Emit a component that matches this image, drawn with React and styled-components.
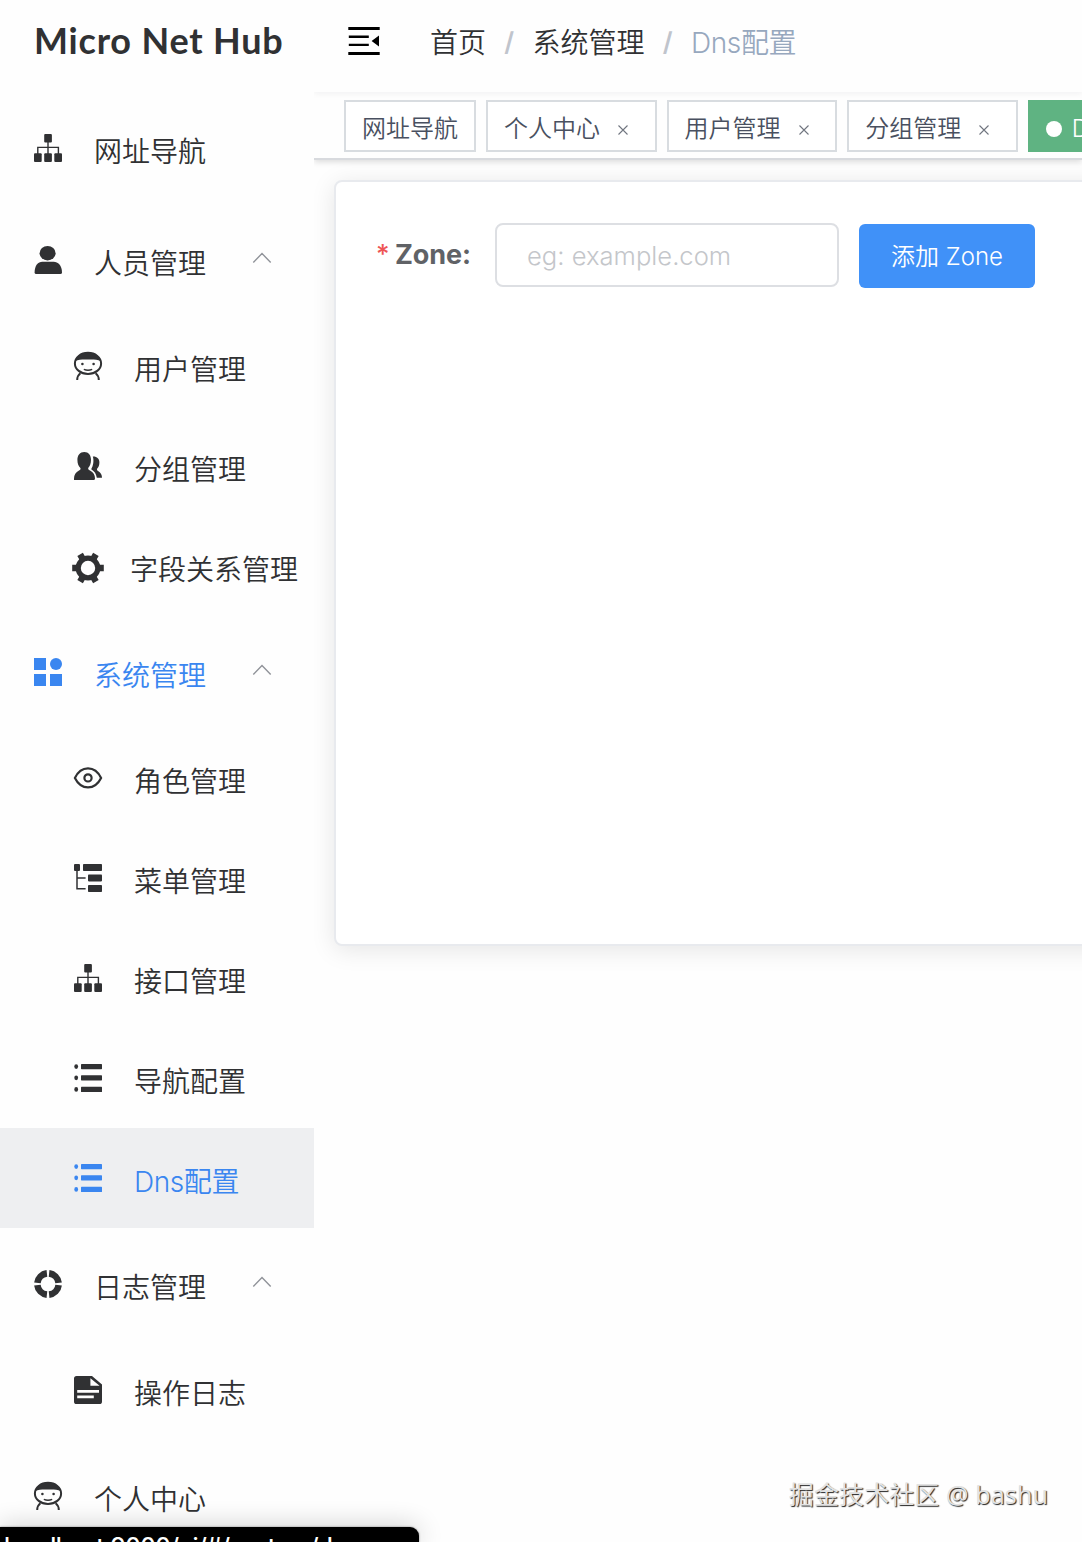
import React from "react";
import styled, { createGlobalStyle, css } from "styled-components";

const GlobalStyle = createGlobalStyle`
  * {
    box-sizing: border-box;
  }
  body {
    margin: 0;
    background: #fefefe;
    font-family: Inter, "Noto Sans CJK SC", sans-serif;
    font-weight: 350;
    color: #303133;
  }
`;

const Page = styled.div`
  position: relative;
  display: flex;
  width: 1082px;
  height: 1542px;
  overflow: hidden;
`;

/* ---------- sidebar ---------- */

const Sidebar = styled.aside`
  flex: none;
  width: 314px;
`;

const Logo = styled.h1`
  height: 92px;
  margin: 0;
  padding-left: 34px;
  font-family: Lato, sans-serif;
  font-size: 36px;
  font-weight: 700;
  line-height: 80px;
  letter-spacing: 0.8px;
  white-space: nowrap;
  color: #303133;
`;

const MenuRow = styled.div`
  display: flex;
  align-items: center;
  height: ${(props) => (props.$child ? 100 : 112)}px;
  padding-left: ${(props) => (props.$child ? 74 : 34)}px;
  color: ${(props) => (props.$blue ? "#3a86f0" : "#303133")};
  background: ${(props) => (props.$active ? "#eeeff1" : "transparent")};
`;

const Icon = styled.svg`
  flex: none;
  display: block;
  width: 28px;
  height: 28px;
  margin-top: ${(props) => (props.$low ? 4 : 0)}px;
  overflow: visible;
  fill: currentColor;
`;

const MenuText = styled.span`
  padding-top: 8px;
  margin-left: ${(props) => (props.$tight ? 28 : 32)}px;
  font-size: 28px;
  line-height: 40px;
  letter-spacing: ${(props) => (props.$latin ? "-0.4px" : "normal")};
  white-space: nowrap;
`;

const Chevron = styled.svg`
  width: 20px;
  height: 12px;
  margin: 0 0 5px 46px;
  fill: none;
  stroke: #909399;
  stroke-width: 1.4;
`;

/* ---------- right side ---------- */

const Main = styled.main`
  flex: 1;
  min-width: 0;
  overflow: hidden;
`;

const Navbar = styled.header`
  position: relative;
  display: flex;
  height: 92px;
  padding: 27px 0 0 34px;
  background: #fefefe;
  box-shadow: 0 2px 6px rgba(0, 21, 41, 0.05);
`;

const Hamburger = styled.svg`
  width: 32px;
  height: 28px;
  margin-right: 50px;
  fill: #000;
`;

const Breadcrumb = styled.nav`
  display: flex;
  height: 32px;
  font-size: 28px;
  line-height: 32px;
`;

const Crumb = styled.span`
  color: ${(props) => (props.$last ? "#97a8be" : "#303133")};
  letter-spacing: ${(props) => (props.$last ? "-0.4px" : "normal")};
`;

const Slash = styled.span`
  width: 46.5px;
  text-align: center;
  font-weight: 600;
  font-size: 26px;
  line-height: 30px;
  color: #c0c4cc;
`;

const TagsBar = styled.div`
  display: flex;
  gap: 10px;
  height: 68px;
  padding: 8px 0 0 30px;
  border-bottom: 2px solid #d8dade;
  box-shadow: 0 2px 6px rgba(0, 0, 0, 0.14);
`;

const Tag = styled.div`
  flex: none;
  display: flex;
  align-items: center;
  width: ${(props) => props.$width}px;
  height: 52px;
  padding-left: 16px;
  font-size: 24px;
  white-space: nowrap;
  color: #495060;
  background: #fff;
  border: 2px solid #d8dce0;
  ${(props) =>
    props.$active &&
    css`
      color: #fff;
      background: #5fb382;
      border-color: #5fb382;
    `}
`;

const TagText = styled.span`
  padding-top: 6px;
  line-height: 36px;
`;

const Close = styled.svg`
  width: 10px;
  height: 10px;
  margin: 7px 0 0 18px;
  stroke: #70757f;
  stroke-width: 1.1;
`;

const Dot = styled.span`
  width: 16px;
  height: 16px;
  margin: 6px 10px 0 0;
  border-radius: 50%;
  background: #fff;
`;

const Card = styled.section`
  width: 1000px;
  height: 766px;
  margin: 20px 0 0 20px;
  padding: 41px 40px;
  background: #fff;
  border: 2px solid #e8eaee;
  border-radius: 8px;
  box-shadow: 0 4px 24px rgba(0, 0, 0, 0.1);
`;

const Form = styled.form`
  display: flex;
  align-items: flex-start;
`;

const Label = styled.label`
  display: flex;
  width: 119px;
  font-size: 27px;
  font-weight: 700;
  line-height: 64px;
  letter-spacing: -0.1px;
  color: #606266;

  &::before {
    content: "*";
    width: 19px;
    font-size: 26px;
    font-weight: 500;
    line-height: 62px;
    color: #ee5555;
  }
`;

const Input = styled.input`
  width: 344px;
  height: 64px;
  padding: 0 30px;
  font: inherit;
  font-size: 25.6px;
  border: 2px solid #dddfe3;
  border-radius: 8px;
  background: #fff;
  outline: none;

  &::placeholder {
    color: #c4c6ca;
    opacity: 1;
  }
`;

const Button = styled.button`
  width: 176px;
  height: 64px;
  margin: 1px 0 0 20px;
  padding: 0 0 4px;
  font: inherit;
  font-size: 24px;
  color: #fff;
  background: #4091f8;
  border: 0;
  border-radius: 6px;
`;

/* ---------- overlays ---------- */

const StatusBubble = styled.div`
  position: absolute;
  left: 0;
  bottom: 0;
  width: 419px;
  height: 15px;
  padding-left: 4px;
  color: #fff;
  background: #000;
  border-top-right-radius: 9px;
  box-shadow: 0 0 26px rgba(0, 0, 0, 0.24), 0 0 2px rgba(0, 0, 0, 0.5);
  font-size: 24px;
  font-weight: 500;
  line-height: 39px;
  letter-spacing: -0.5px;
  white-space: nowrap;
`;

const Watermark = styled.div`
  position: absolute;
  right: 34px;
  bottom: 28px;
  font-family: "Noto Sans", "Noto Sans CJK SC", sans-serif;
  font-size: 25px;
  font-weight: 400;
  line-height: 40px;
  letter-spacing: 0.1px;
  color: #e2e2e2;
  text-shadow: 1px 1px 1px #222;
  white-space: nowrap;
`;

const icons = {
  tree: (
    <>
      <rect x="10.2" y="0" width="7.7" height="8.4" rx="1" />
      <rect x="0" y="19.2" width="7.7" height="8.8" rx="1" />
      <rect x="10.2" y="19.2" width="7.7" height="8.8" rx="1" />
      <rect x="20.3" y="19.2" width="7.7" height="8.8" rx="1" />
      <path
        d="M14 8V20M3.8 20V13.4H24.4V20"
        fill="none"
        stroke="currentColor"
        strokeWidth="1.4"
      />
    </>
  ),
  user: (
    <>
      <ellipse cx="13.6" cy="7.2" rx="8" ry="7.2" />
      <path d="M.6 26.4C.6 19.6 4 15.7 8.4 15.7H19.6C24 15.7 28 19.6 28 26.4Q28 28 26.4 28H2.2Q.6 28 .6 26.4Z" />
    </>
  ),
  face: (
    <>
      <ellipse
        cx="14"
        cy="11.4"
        rx="13.1"
        ry="10.6"
        fill="none"
        stroke="currentColor"
        strokeWidth="2"
      />
      <path d="M1.6 9C3 3 8.5.6 14 .6S25 3 26.4 9C23.5 7.4 19 7.6 14 7.6S4.5 7.4 1.6 9Z" />
      <circle cx="8.4" cy="12" r="1.3" />
      <circle cx="19.6" cy="12" r="1.3" />
      <path
        d="M9.8 17.4Q14 19 18.2 17.4"
        fill="none"
        stroke="currentColor"
        strokeWidth="1.4"
      />
      <path
        d="M6.4 21.2Q3.2 23.6 3.2 28M21.6 21.2Q24.8 23.6 24.8 28"
        fill="none"
        stroke="currentColor"
        strokeWidth="2"
      />
    </>
  ),
  peoples: (
    <>
      <path d="M10.3 0C14.6 0 17 3.3 17 7.8C17 11.8 15.8 14.3 14.2 16C14 17.2 14.6 17.7 16 18.4C19.4 20.2 21 22.7 21 26.6Q21 28 20 28H0V26.4C0 22.6 1.8 20.2 5 18.4C6.4 17.7 6.8 17.2 6.4 16C4.6 14.3 3.4 11.8 3.4 7.8C3.4 3.3 6 0 10.3 0Z" />
      <path d="M18.8 4.6C23 4.4 25.4 7 25.4 10.4C25.4 13.6 24.4 15 23.2 16.6C22.6 18 23.2 18.6 24.4 19.3C26.8 20.9 28 22.8 28 25.8H22.8C22.2 21.8 20.6 19.4 17.2 17.2C19.2 14.2 20.2 8.6 18.8 4.6Z" />
    </>
  ),
  gear: (
    <>
      <circle
        cx="14"
        cy="14"
        r="9.8"
        fill="none"
        stroke="currentColor"
        strokeWidth="5.2"
      />
      {[0, 60, 120, 180, 240, 300].map((angle) => (
        <path
          key={angle}
          d="M22.5 8.6 26 10.8H29.8V17.2H26L22.5 19.4Z"
          transform={`rotate(${angle} 14 14)`}
        />
      ))}
    </>
  ),
  component: (
    <>
      <rect width="12" height="12" />
      <circle cx="22" cy="6" r="6" />
      <rect y="16" width="12" height="12" />
      <rect x="16" y="16" width="12" height="12" />
    </>
  ),
  eye: (
    <g fill="none" stroke="currentColor" strokeWidth="2.2">
      <path d="M.9 14C4 7.6 8.4 4.4 14 4.4S24 7.6 27.1 14C24 20.2 19.6 23.4 14 23.4S4 20.2.9 14Z" />
      <circle cx="14" cy="13.9" r="3.6" />
    </g>
  ),
  treeTable: (
    <>
      <rect width="6" height="7" rx="1" />
      <rect x="9" width="19" height="7" rx=".8" />
      <rect x="14" y="10.4" width="14" height="7" rx=".8" />
      <rect x="14" y="21" width="14" height="7" rx=".8" />
      <path
        d="M3 6V24.7H11.6M3 14H11.6"
        fill="none"
        stroke="currentColor"
        strokeWidth="1.5"
      />
    </>
  ),
  list: (
    <>
      {[2.6, 13.8, 25.4].map((y) => (
        <React.Fragment key={y}>
          <ellipse cx="2.2" cy={y} rx="1.9" ry="2.4" />
          <rect x="7" y={y - 2.6} width="21" height="5.2" rx=".6" />
        </React.Fragment>
      ))}
    </>
  ),
  ring: (
    <g fill="none" stroke="currentColor" strokeWidth="6.6">
      {[0, 90, 180, 270].map((angle) => (
        <path
          key={angle}
          d="M15.1 3.4A10.7 10.7 0 0 1 24.6 12.9"
          transform={`rotate(${angle} 14 14)`}
        />
      ))}
    </g>
  ),
  doc: (
    <path
      fillRule="evenodd"
      d="M2.6 0H18L28 8.6V25.4Q28 28 25.4 28H2.6Q0 28 0 25.4V2.6Q0 0 2.6 0ZM16.4 2.2V9.8H25.6ZM3.2 14V16.8H25V14ZM3.2 19.4V22.2H19.8V19.4Z"
    />
  ),
};

const menu = [
  { icon: "tree", text: "网址导航" },
  { icon: "user", text: "人员管理", open: true },
  { icon: "face", text: "用户管理", child: true },
  { icon: "peoples", text: "分组管理", child: true },
  { icon: "gear", text: "字段关系管理", child: true, tight: true },
  { icon: "component", text: "系统管理", open: true, blue: true },
  { icon: "eye", text: "角色管理", child: true },
  { icon: "treeTable", text: "菜单管理", child: true },
  { icon: "tree", text: "接口管理", child: true },
  { icon: "list", text: "导航配置", child: true },
  {
    icon: "list",
    text: "Dns配置",
    child: true,
    blue: true,
    active: true,
    latin: true,
  },
  { icon: "ring", text: "日志管理", open: true },
  { icon: "doc", text: "操作日志", child: true },
  { icon: "face", text: "个人中心" },
];

const tags = ["个人中心", "用户管理", "分组管理"];

const App = () => {
  return (
    <Page>
      <GlobalStyle />
      <Sidebar>
        <Logo>Micro Net Hub</Logo>
        {menu.map((item) => (
          <MenuRow
            key={item.text}
            $child={item.child}
            $blue={item.blue}
            $active={item.active}
          >
            <Icon viewBox="0 0 28 28" $low={item.tight}>
              {icons[item.icon]}
            </Icon>
            <MenuText $tight={item.tight} $latin={item.latin}>
              {item.text}
            </MenuText>
            {item.open && (
              <Chevron viewBox="0 0 20 12">
                <path d="M1.3 10.5 10 1.5 18.7 10.5" />
              </Chevron>
            )}
          </MenuRow>
        ))}
      </Sidebar>

      <Main>
        <Navbar>
          <Hamburger viewBox="0 0 32 28">
            <path d="M.3 0H31.7V3H.3ZM.8 8.6H20.8V11H.8ZM.8 16.7H20.8V19.1H.8ZM.3 25H31.7V28H.3ZM23.6 14 31 8.6V19.4Z" />
          </Hamburger>
          <Breadcrumb>
            <Crumb>首页</Crumb>
            <Slash>/</Slash>
            <Crumb>系统管理</Crumb>
            <Slash>/</Slash>
            <Crumb $last>Dns配置</Crumb>
          </Breadcrumb>
        </Navbar>

        <TagsBar>
          <Tag $width={132}>
            <TagText>网址导航</TagText>
          </Tag>
          {tags.map((tag) => (
            <Tag key={tag} $width={170.6}>
              <TagText>{tag}</TagText>
              <Close viewBox="0 0 10 10">
                <path d="M.5.5 9.5 9.5M9.5.5.5 9.5" />
              </Close>
            </Tag>
          ))}
          <Tag $width={170} $active>
            <Dot />
            <TagText>Dns配置</TagText>
          </Tag>
        </TagsBar>

        <Card>
          <Form>
            <Label htmlFor="zone">Zone:</Label>
            <Input id="zone" placeholder="eg: example.com" />
            <Button type="button">添加 Zone</Button>
          </Form>
        </Card>
      </Main>

      <Watermark>掘金技术社区 @ bashu</Watermark>
      <StatusBubble>localhost:9000/ui/#/system/dns</StatusBubble>
    </Page>
  );
};

export default App;
